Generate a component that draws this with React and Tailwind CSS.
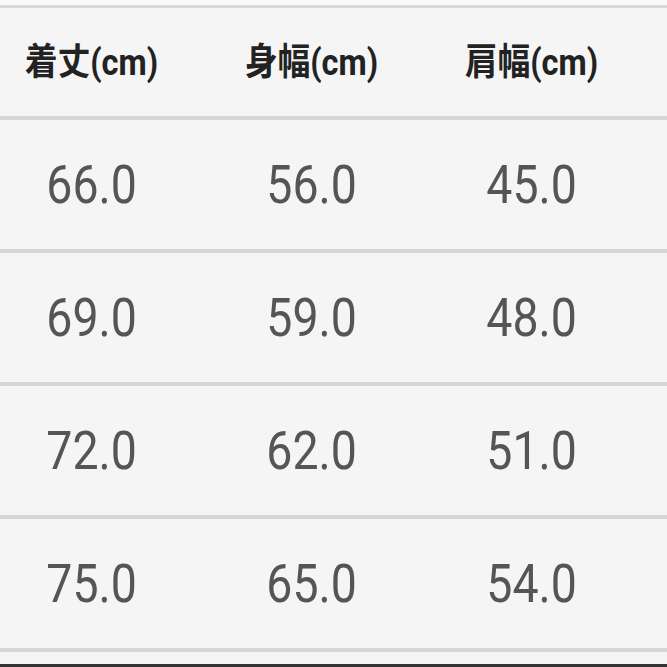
const headers = ['着丈(cm)', '身幅(cm)', '肩幅(cm)'];

const rows = [
  ['66.0', '56.0', '45.0'],
  ['69.0', '59.0', '48.0'],
  ['72.0', '62.0', '51.0'],
  ['75.0', '65.0', '54.0'],
];

export default function App() {
  return (
    <div className="w-[667px] h-[667px] overflow-hidden bg-[#f5f5f5] flex flex-col border-b-[3px] border-[#333]">
      <div className="h-[5px] bg-[#f9f9f9] border-b-[3px] border-[#d9d9d9] box-content" />
      {/* header */}
      <div className="flex h-[108px] items-center -ml-[18px] border-b-[4px] border-[#d6d6d6] box-content">
        {headers.map((h) => (
          <div key={h} className="w-[220px] flex justify-center">
            <span className="inline-block scale-x-[0.88] font-bold text-[37px] leading-none text-[#222] font-['Roboto','Noto_Sans_CJK_JP',sans-serif]">
              {h}
            </span>
          </div>
        ))}
      </div>
      {rows.map((r, i) => (
        <div key={i} className="flex h-[129px] items-center -ml-[18px] border-b-[4px] border-[#d6d6d6] box-content">
          {r.map((v, j) => (
            <div key={j} className="w-[220px] flex justify-center">
              <span className="inline-block scale-x-[0.86] text-[54px] leading-none text-[#555] font-['Roboto',sans-serif]">
                {v}
              </span>
            </div>
          ))}
        </div>
      ))}
    </div>
  );
}
